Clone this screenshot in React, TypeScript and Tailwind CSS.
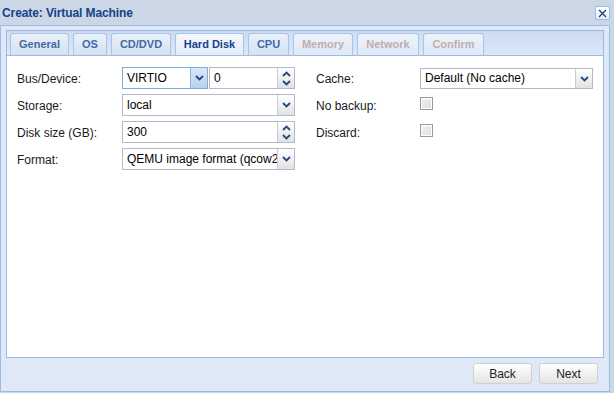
import React from "react";

const tabs = [
  { label: "General", w: "w-[59px]", state: "idle" },
  { label: "OS", w: "w-[34px]", state: "idle" },
  { label: "CD/DVD", w: "w-[60px]", state: "idle" },
  { label: "Hard Disk", w: "w-[69px]", state: "active" },
  { label: "CPU", w: "w-[41px]", state: "idle" },
  { label: "Memory", w: "w-[60px]", state: "off" },
  { label: "Network", w: "w-[62px]", state: "off" },
  { label: "Confirm", w: "w-[61px]", state: "off" },
];

function Chevron({ up = false }: { up?: boolean }) {
  return (
    <svg width="9" height="6" viewBox="0 0 9 6">
      <path
        d={up ? "M1 5 L4.5 1.6 L8 5" : "M1 1 L4.5 4.4 L8 1"}
        fill="none"
        stroke="#24488a"
        strokeWidth="1.9"
      />
    </svg>
  );
}

function Trigger({ hover = false }: { hover?: boolean }) {
  return (
    <div
      className={`w-[17px] h-full flex items-center justify-center border-l ${
        hover
          ? "border-[#8db2e3] bg-gradient-to-b from-[#d9e7f8] to-[#b9d1ee]"
          : "border-[#c9ccd6] bg-gradient-to-b from-white to-[#e2e2e2]"
      }`}
    >
      <Chevron />
    </div>
  );
}

function Combo({ value, width, focus = false }: { value: string; width: string; focus?: boolean }) {
  return (
    <div
      className={`${width} h-[22px] flex border bg-white ${
        focus ? "border-[#7eadd9]" : "border-[#b5b8c8]"
      }`}
    >
      <div className="flex-1 min-w-0 overflow-hidden whitespace-nowrap pl-[4px] pt-[3px] text-[12px] leading-[15px] text-black">
        {value}
      </div>
      <Trigger hover={focus} />
    </div>
  );
}

function Spinner({ value, width }: { value: string; width: string }) {
  return (
    <div className={`${width} h-[22px] flex border border-[#b5b8c8] bg-white`}>
      <div className="flex-1 pl-[4px] pt-[3px] text-[12px] leading-[15px] text-black">{value}</div>
      <div className="w-[17px] h-full flex flex-col border-l border-[#c9ccd6] bg-gradient-to-b from-white to-[#e2e2e2]">
        <div className="flex-1 flex items-center justify-center pt-[1px]">
          <Chevron up />
        </div>
        <div className="flex-1 flex items-center justify-center pb-[1px]">
          <Chevron />
        </div>
      </div>
    </div>
  );
}

function Checkbox() {
  return (
    <div className="w-[13px] h-[13px] border border-[#9a9a9a] bg-gradient-to-br from-[#f4f4f4] to-[#dcdcdc] shadow-[inset_0_0_0_1px_#ffffff]" />
  );
}

function Row({ label, children }: { label: string; children: React.ReactNode }) {
  return (
    <div className="flex h-[22px]">
      <div className="w-[105px] pt-[5px] text-[12px] leading-[15px] text-[#1a1a1a]">{label}</div>
      {children}
    </div>
  );
}

function RightRow({ label, children }: { label: string; children: React.ReactNode }) {
  return (
    <div className="flex h-[22px]">
      <div className="w-[104px] pt-[5px] text-[12px] leading-[15px] text-[#1a1a1a]">{label}</div>
      {children}
    </div>
  );
}

export default function App() {
  return (
    <div className="w-[614px] h-[393px] bg-[#cbd7e4] font-['Liberation_Sans',Arial,sans-serif] flex flex-col overflow-hidden">
      {/* title bar */}
      <div className="h-[25px] flex items-center justify-between pl-[2px] pr-[4px]">
        <span className="text-[12px] font-bold text-[#15428b] tracking-[-0.1px]">Create: Virtual Machine</span>
        <div className="w-[15px] h-[14px] mb-[-1px] rounded-[2px] border border-[#99bbe8] bg-gradient-to-b from-white to-[#e6eef9] flex items-center justify-center">
          <svg width="9" height="9" viewBox="0 0 9 9">
            <path d="M1 1 L8 8 M8 1 L1 8" stroke="#1f3f7a" strokeWidth="1.3" />
          </svg>
        </div>
      </div>

      {/* window body */}
      <div className="w-[610px] h-[367px] border border-[#99bbe8] bg-[#dfe8f6] flex flex-col pt-[4px] px-[5px]">
        <div className="h-[328px] border border-[#99bbe8] flex flex-col">
          {/* tab strip */}
          <div className="h-[25px] pt-[2px] pl-[3px] flex gap-[4px] border-b border-[#99bbe8] bg-gradient-to-b from-[#cbdcf2] to-[#dce8f7]">
            {tabs.map((t) => (
              <div
                key={t.label}
                className={`${t.w} h-[22px] rounded-t-[3px] border border-b-0 border-[#a9c4ea] flex items-center justify-center text-[11px] font-bold ${
                  t.state === "active"
                    ? "bg-gradient-to-b from-[#f5f8fd] to-[#e3edfa] text-[#15428b]"
                    : t.state === "off"
                    ? "bg-gradient-to-b from-[#edf2fa] to-[#dfe9f7] text-[#bcb0ac]"
                    : "bg-gradient-to-b from-[#eaf0f9] to-[#d4e2f3] text-[#416aa3]"
                }`}
              >
                {t.label}
              </div>
            ))}
          </div>

          {/* form */}
          <div className="flex-1 bg-white pt-[11px] pl-[10px] flex gap-[21px]">
            <div className="flex flex-col gap-[5px] w-[278px]">
              <Row label="Bus/Device:">
                <div className="flex gap-[1px]">
                  <Combo value="VIRTIO" width="w-[86px]" focus />
                  <Spinner value="0" width="w-[86px]" />
                </div>
              </Row>
              <Row label="Storage:">
                <Combo value="local" width="w-[173px]" />
              </Row>
              <Row label="Disk size (GB):">
                <Spinner value="300" width="w-[173px]" />
              </Row>
              <Row label="Format:">
                <Combo value="QEMU image format (qcow2)" width="w-[173px]" />
              </Row>
            </div>
            <div className="flex flex-col gap-[5px] w-[277px]">
              <RightRow label="Cache:">
                <div className="pt-[1px]">
                  <div className="w-[173px] h-[21px] flex border border-[#b5b8c8] bg-white">
                    <div className="flex-1 pl-[4px] pt-[2px] text-[12px] leading-[15px] text-black">Default (No cache)</div>
                    <Trigger />
                  </div>
                </div>
              </RightRow>
              <RightRow label="No backup:">
                <div className="pt-[3px]">
                  <Checkbox />
                </div>
              </RightRow>
              <RightRow label="Discard:">
                <div className="pt-[3px]">
                  <Checkbox />
                </div>
              </RightRow>
            </div>
          </div>
        </div>

        {/* footer */}
        <div className="flex-1 flex justify-end items-start pt-[5px] pr-[6px] gap-[7px]">
          <button className="w-[59px] h-[21px] rounded-[3px] border border-[#d0d0d0] bg-gradient-to-b from-white to-[#e4e4e4] text-[12px] text-[#222]">
            Back
          </button>
          <button className="w-[59px] h-[21px] rounded-[3px] border border-[#d0d0d0] bg-gradient-to-b from-white to-[#e4e4e4] text-[12px] text-[#222]">
            Next
          </button>
        </div>
      </div>
    </div>
  );
}
